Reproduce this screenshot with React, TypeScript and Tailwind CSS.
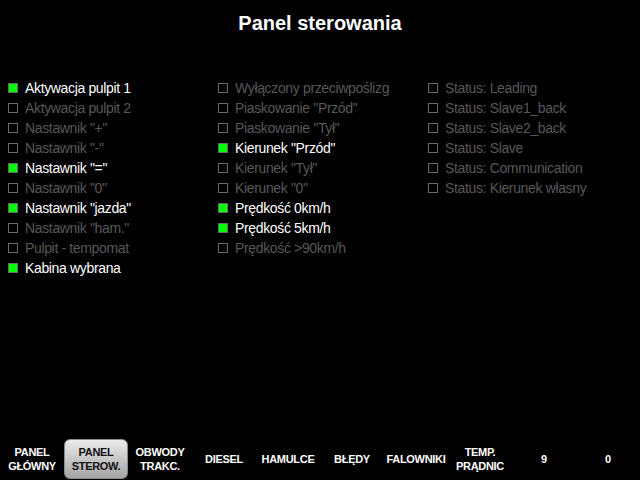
import React from "react";

type Item = { label: string; on: boolean };

const col1: Item[] = [
  { label: "Aktywacja pulpit 1", on: true },
  { label: "Aktywacja pulpit 2", on: false },
  { label: 'Nastawnik "+"', on: false },
  { label: 'Nastawnik "-"', on: false },
  { label: 'Nastawnik "="', on: true },
  { label: 'Nastawnik "0"', on: false },
  { label: 'Nastawnik "jazda"', on: true },
  { label: 'Nastawnik "ham."', on: false },
  { label: "Pulpit - tempomat", on: false },
  { label: "Kabina wybrana", on: true },
];
const col2: Item[] = [
  { label: "Wyłączony przeciwpoślizg", on: false },
  { label: 'Piaskowanie "Przód"', on: false },
  { label: 'Piaskowanie "Tył"', on: false },
  { label: 'Kierunek "Przód"', on: true },
  { label: 'Kierunek "Tył"', on: false },
  { label: 'Kierunek "0"', on: false },
  { label: "Prędkość 0km/h", on: true },
  { label: "Prędkość 5km/h", on: true },
  { label: "Prędkość >90km/h", on: false },
];
const col3: Item[] = [
  { label: "Status: Leading", on: false },
  { label: "Status: Slave1_back", on: false },
  { label: "Status: Slave2_back", on: false },
  { label: "Status: Slave", on: false },
  { label: "Status: Communication", on: false },
  { label: "Status: Kierunek własny", on: false },
];

const nav: { lines: string[]; active?: boolean }[] = [
  { lines: ["PANEL", "GŁÓWNY"] },
  { lines: ["PANEL", "STEROW."], active: true },
  { lines: ["OBWODY", "TRAKC."] },
  { lines: ["DIESEL"] },
  { lines: ["HAMULCE"] },
  { lines: ["BŁĘDY"] },
  { lines: ["FALOWNIKI"] },
  { lines: ["TEMP.", "PRĄDNIC"] },
  { lines: ["9"] },
  { lines: ["0"] },
];

function Row({ item }: { item: Item }) {
  return (
    <div className="flex items-center h-[20px] pl-2">
      <div
        className={
          item.on
            ? "w-[10px] h-[10px] border border-[#6a6a6a] bg-[#00ff00]"
            : "w-[10px] h-[10px] border border-[#6a6a6a] bg-black"
        }
      />
      <span
        className={
          item.on
            ? "ml-[7px] text-[14px] leading-[20px] tracking-[-0.35px] text-white whitespace-nowrap"
            : "ml-[7px] text-[14px] leading-[20px] tracking-[-0.35px] text-[#585858] whitespace-nowrap"
        }
      >
        {item.label}
      </span>
    </div>
  );
}

export default function App() {
  return (
    <div
      className="w-[640px] h-[480px] bg-black flex flex-col overflow-hidden"
      style={{ fontFamily: '"Liberation Sans", Arial, sans-serif' }}
    >
      <div className="pt-[11px] text-center text-white font-bold text-[20px] leading-6">
        Panel sterowania
      </div>
      <div className="mt-[43px] flex">
        {[col1, col2, col3].map((c, i) => (
          <div key={i} className="w-[210px] flex flex-col">
            {c.map((it) => (
              <Row key={it.label} item={it} />
            ))}
          </div>
        ))}
      </div>
      <div className="mt-auto mb-[1px] flex h-[40px]">
        {nav.map((n, i) => (
          <div
            key={i}
            className={
              n.active
                ? "w-[64px] h-[40px] flex flex-col items-center justify-center rounded-[6px] border border-[#8a8a8a] bg-gradient-to-b from-[#ececec] to-[#a4a4a4] text-[#111] font-bold text-[11px] leading-[14px]"
                : "w-[64px] h-[40px] flex flex-col items-center justify-center text-white font-bold text-[11px] leading-[14px]"
            }
          >
            {n.lines.map((l) => (
              <span key={l} className="whitespace-nowrap tracking-[-0.3px]">
                {l}
              </span>
            ))}
          </div>
        ))}
      </div>
    </div>
  );
}
